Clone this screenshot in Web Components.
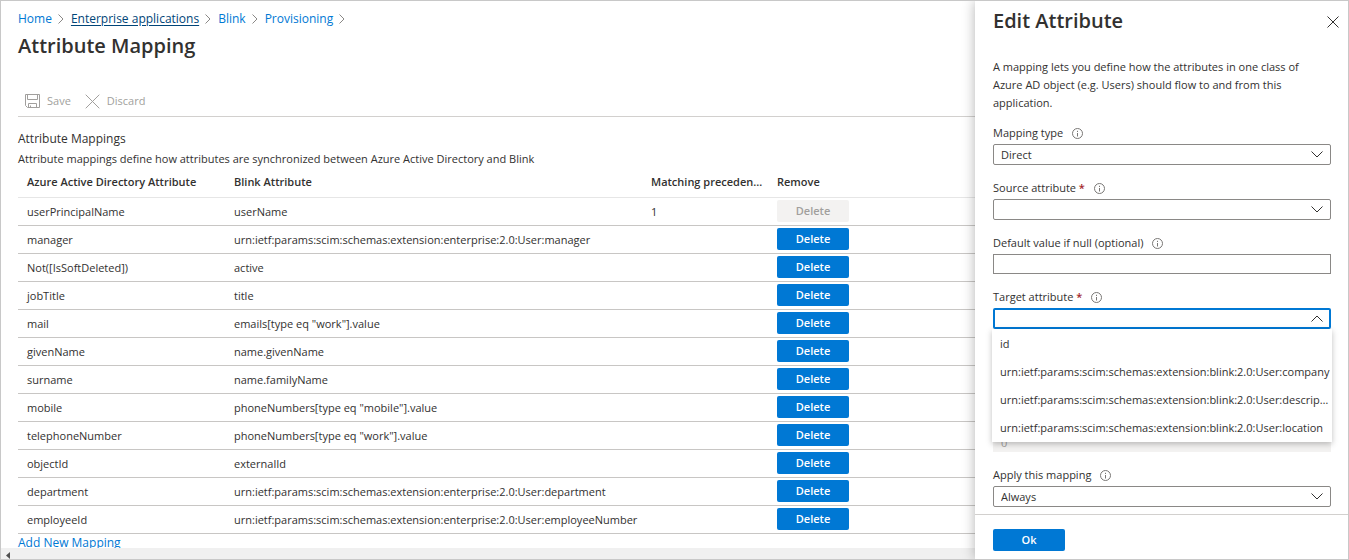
<!DOCTYPE html>
<html lang="en">
<head>
<meta charset="utf-8">
<meta name="viewport" content="width=device-width, initial-scale=1">
<title>Attribute Mapping</title>
<style>
  html, body { margin: 0; height: 100%; }
  body {
    font-family: "Open Sans", "Noto Sans", sans-serif;
    font-size: 11px;
    line-height: 18px;
    color: #323130;
    background: #fff;
    --blue: #0078d4;
  }
</style>
</head>
<body>
<az-shell>
  <az-mapping-page slot="main"></az-mapping-page>
  <az-edit-panel slot="panel"></az-edit-panel>
</az-shell>

<script>
function define(name, html, setup) {
  const template = document.createElement('template');
  template.innerHTML = html;
  customElements.define(name, class extends HTMLElement {
    constructor() {
      super();
      this.attachShadow({ mode: 'open' }).append(template.content.cloneNode(true));
    }
    connectedCallback() {
      if (setup && !this.ready) { this.ready = true; setup(this, this.shadowRoot); }
    }
  });
}

/* Push button: primary by default, grey when disabled */
define('az-button', `
  <style>
    :host { display: inline-block; width: 72px; }
    button {
      display: block; box-sizing: border-box; width: 100%; height: 22px; padding: 0;
      border: 0; border-radius: 2px; background: var(--blue); color: #fff;
      font: inherit; font-weight: 600; line-height: 22px; text-align: center; cursor: pointer;
    }
    button:disabled { background: #f3f2f1; color: #a19f9d; cursor: default; }
  </style>
  <button type="button"><slot></slot></button>
`, (host, root) => {
  root.querySelector('button').disabled = host.hasAttribute('disabled');
});

define('az-breadcrumb', `
  <style>
    :host { display: block; font-size: 12px; line-height: 18px; }
    ol { display: flex; margin: 0; padding: 0; list-style: none; }
    li { display: flex; align-items: center; }
    a { color: var(--blue); text-decoration: none; }
    a.hover { color: #004578; text-decoration: underline; text-underline-offset: 2px; }
    svg { width: 6px; height: 10px; margin: 0 7px 0 6px; fill: none; stroke: #8a8886; }
  </style>
  <nav aria-label="Breadcrumb"><ol></ol></nav>
`, (host, root) => {
  const list = root.querySelector('ol');
  for (const text of ['Home', 'Enterprise applications', 'Blink', 'Provisioning']) {
    const li = document.createElement('li');
    li.innerHTML = '<a href="#"></a><svg viewBox="0 0 6 10" aria-hidden="true"><path d="M.5.5 5 5 .5 9.500"/></svg>';
    li.firstChild.textContent = text;
    if (text === 'Enterprise applications') li.firstChild.className = 'hover';
    list.append(li);
  }
});

define('az-toolbar', `
  <style>
    :host { display: flex; gap: 14px; height: 30px; padding-left: 7px; border-bottom: 1px solid #d2d0ce; }
    button {
      display: flex; align-items: center; gap: 7px; padding: 0; border: 0; background: none;
      font: inherit; color: #a19f9d;
    }
    svg { width: 15px; height: 15px; fill: none; stroke: #a19f9d; }
  </style>
  <button type="button" disabled>
    <svg viewBox="0 0 15 15" aria-hidden="true"><path d="M.5.5h14v13h-12l-2-2zM2.500.5v5h10v-5M3.500 13.500v-4h8v4M5.500 11.500v2"/></svg>Save
  </button>
  <button type="button" disabled>
    <svg viewBox="0 0 15 15" aria-hidden="true"><path d="m.7.7 13.600 13.600M14.300.7.7 14.300"/></svg>Discard
  </button>
`);

define('az-mapping-table', `
  <style>
    :host { display: block; }
    table { width: 100%; border-collapse: separate; border-spacing: 0; table-layout: fixed; }
    .source { width: 207px; }
    .target { width: 417px; }
    .order { width: 126px; }
    th, td {
      box-sizing: border-box; padding: 0 4px 0 9px; text-align: left; white-space: nowrap;
      overflow: hidden; text-overflow: ellipsis; border-bottom: 1px solid #c8c6c4;
    }
    th { height: 29px; padding-bottom: 2px; font-weight: 600; border-bottom-color: #e6e6e6; }
    td { height: 28px; }
    az-button { display: block; margin-bottom: 1px; }
  </style>
  <table>
    <colgroup><col class="source"><col class="target"><col class="order"><col></colgroup>
    <thead><tr>
      <th scope="col">Azure Active Directory Attribute</th>
      <th scope="col">Blink Attribute</th>
      <th scope="col">Matching precedence</th>
      <th scope="col">Remove</th>
    </tr></thead>
    <tbody></tbody>
  </table>
`, (host, root) => {
  const ext = 'urn:ietf:params:scim:schemas:extension:enterprise:2.0:User:';
  const rows = [
    ['userPrincipalName', 'userName', '1'],
    ['manager', ext + 'manager'],
    ['Not([IsSoftDeleted])', 'active'],
    ['jobTitle', 'title'],
    ['mail', 'emails[type eq "work"].value'],
    ['givenName', 'name.givenName'],
    ['surname', 'name.familyName'],
    ['mobile', 'phoneNumbers[type eq "mobile"].value'],
    ['telephoneNumber', 'phoneNumbers[type eq "work"].value'],
    ['objectId', 'externalId'],
    ['department', ext + 'department'],
    ['employeeId', ext + 'employeeNumber']
  ];
  const body = root.querySelector('tbody');
  for (const [source, target, order = ''] of rows) {
    const tr = body.insertRow();
    for (const text of [source, target, order]) tr.insertCell().textContent = text;
    tr.insertCell().innerHTML = order ? '<az-button disabled>Delete</az-button>' : '<az-button>Delete</az-button>';
  }
});

define('az-mapping-page', `
  <style>
    :host { display: flex; flex-direction: column; height: 100%; }
    .content { flex: 1; min-height: 0; overflow: hidden; padding: 9px 0 0 17px; }
    h1 { margin: 4px 0 26px; font-size: 20px; line-height: 28px; font-weight: 600; }
    h2 { margin: 12px 0 0; font-size: 12px; line-height: 20px; font-weight: 400; }
    p { margin: 0; line-height: 20px; }
    a { font-size: 12px; color: var(--blue); text-decoration: none; }
    .scroll { flex: none; display: flex; align-items: flex-end; height: 11px; padding-left: 5px; background: #f0f0f0; }
    .scroll svg { width: 4px; height: 7px; fill: #505050; }
  </style>
  <div class="content">
    <az-breadcrumb></az-breadcrumb>
    <h1>Attribute Mapping</h1>
    <az-toolbar></az-toolbar>
    <h2>Attribute Mappings</h2>
    <p>Attribute mappings define how attributes are synchronized between Azure Active Directory and Blink</p>
    <az-mapping-table></az-mapping-table>
    <a href="#">Add New Mapping</a>
  </div>
  <div class="scroll" aria-hidden="true"><svg viewBox="0 0 4 7"><path d="M4 0v7L0 3.500z"/></svg></div>
`);

/* Labelled form field; "kind" is select or input, "menu" lists the open options */
define('az-field', `
  <style>
    :host { display: block; }
    .caption { display: flex; align-items: center; gap: 9px; height: 18px; margin-bottom: 2px; }
    .star { color: #a4262c; font-weight: 600; }
    .info { width: 11px; height: 11px; fill: none; stroke: #797775; }
    .box { position: relative; display: grid; align-items: center; }
    .box > select, .box > input, .chevron { grid-area: 1 / 1; }
    select, input {
      appearance: none; box-sizing: border-box; width: 100%; margin: 0; padding: 0 32px 0 7px;
      border: 1px solid #8a8886; border-radius: 2px; background: #fff; outline: 0;
      font: inherit; line-height: 18px; color: inherit;
    }
    select { height: 21px; }
    input { height: 20px; border-radius: 0; }
    input:disabled { border-color: #f3f2f1; background: #f3f2f1; color: #a19f9d; }
    .chevron { justify-self: end; width: 12px; height: 7px; margin-right: 8px; fill: none; stroke: #323130; pointer-events: none; }
    :host([menu]) select { border: 2px solid var(--blue); }
    :host([menu]) .chevron { transform: rotate(180deg); }
    :host([bare]) .caption { display: none; }
    ul {
      position: absolute; z-index: 2; top: 100%; left: -1px; right: -1px; margin: 0; padding: 1px 0 0;
      list-style: none; background: #fff; box-shadow: 0 2px 6px rgba(0, 0, 0, .25);
    }
    li { padding-left: 8px; line-height: 28px; white-space: nowrap; overflow: hidden; text-overflow: ellipsis; }
  </style>
  <div class="caption">
    <label for="control"></label>
    <svg class="info" viewBox="0 0 11 11" role="img" aria-label="Information"><circle cx="5.500" cy="5.500" r="5"/><path d="M5.500 5v3.500M5.500 2.800v1.200"/></svg>
  </div>
  <div class="box"></div>
`, (host, root) => {
  const bare = host.hasAttribute('bare');
  const label = root.querySelector('label');
  if (!bare) label.textContent = host.getAttribute('label');
  if (host.hasAttribute('required')) {
    const star = document.createElement('span');
    star.className = 'star';
    star.textContent = ' *';
    label.append(star);
  }
  const box = root.querySelector('.box');
  const value = host.getAttribute('value') || '';
  const control = document.createElement(host.getAttribute('kind'));
  control.id = 'control';
  if (bare) control.setAttribute('aria-label', host.getAttribute('label'));
  if (control.localName === 'select') {
    control.add(new Option(value, value));
    box.append(control);
    box.insertAdjacentHTML('beforeend', '<svg class="chevron" viewBox="0 0 12 7" aria-hidden="true"><path d="m.5.5 5.500 5.500L11.500.5"/></svg>');
  } else {
    control.type = 'text';
    control.value = value;
    control.disabled = host.hasAttribute('disabled');
    box.append(control);
  }
  if (host.hasAttribute('menu')) {
    const list = document.createElement('ul');
    list.setAttribute('role', 'listbox');
    for (const text of host.getAttribute('menu').split(' ')) {
      const li = document.createElement('li');
      li.setAttribute('role', 'option');
      li.textContent = text;
      list.append(li);
    }
    box.append(list);
  }
});

define('az-edit-panel', `
  <style>
    :host { display: flex; flex-direction: column; height: 100%; background: #fff; box-shadow: 0 0 12px rgba(0, 0, 0, .3); }
    header { display: flex; justify-content: space-between; padding: 6px 9px 0 18px; }
    h2 { margin: 0; font-size: 20px; line-height: 28px; font-weight: 600; }
    .close { display: flex; align-items: center; padding: 2px 0 0; border: 0; background: none; }
    .close svg { width: 12px; height: 12px; fill: none; stroke: #323130; }
    .form { flex: 1; min-height: 0; overflow: hidden; padding: 23px 17px 0 18px; }
    p { margin: 0 0 12px; }
    .group { display: grid; gap: 14px; }
    .group + .group { margin-top: 103px; }
    footer { flex: none; padding: 14px 18px 8px; border-top: 1px solid #d2d0ce; }
    footer az-button { display: block; }
  </style>
  <header>
    <h2>Edit Attribute</h2>
    <button class="close" type="button" aria-label="Close"><svg viewBox="0 0 12 12" aria-hidden="true"><path d="m.5.5 11 11M11.500.5l-11 11"/></svg></button>
  </header>
  <div class="form">
    <p>A mapping lets you define how the attributes in one class of Azure AD object (e.g. Users) should flow to and from this application.</p>
    <div class="group">
      <az-field kind="select" label="Mapping type" value="Direct"></az-field>
      <az-field kind="select" label="Source attribute" required></az-field>
      <az-field kind="input" label="Default value if null (optional)"></az-field>
      <az-field kind="select" label="Target attribute" required
        menu="id urn:ietf:params:scim:schemas:extension:blink:2.0:User:company urn:ietf:params:scim:schemas:extension:blink:2.0:User:description urn:ietf:params:scim:schemas:extension:blink:2.0:User:location"></az-field>
    </div>
    <div class="group">
      <az-field kind="input" label="Matching precedence" value="0" disabled bare></az-field>
      <az-field kind="select" label="Apply this mapping" value="Always"></az-field>
    </div>
  </div>
  <footer><az-button>Ok</az-button></footer>
`);

define('az-shell', `
  <style>
    :host { display: grid; grid-template-columns: minmax(0, 1fr) 373px; box-sizing: border-box; height: 100vh; border: 1px solid #c8c8c8; overflow: hidden; }
    ::slotted(*) { min-height: 0; min-width: 0; }
  </style>
  <slot name="main"></slot>
  <slot name="panel"></slot>
`);
</script>
</body>
</html>
